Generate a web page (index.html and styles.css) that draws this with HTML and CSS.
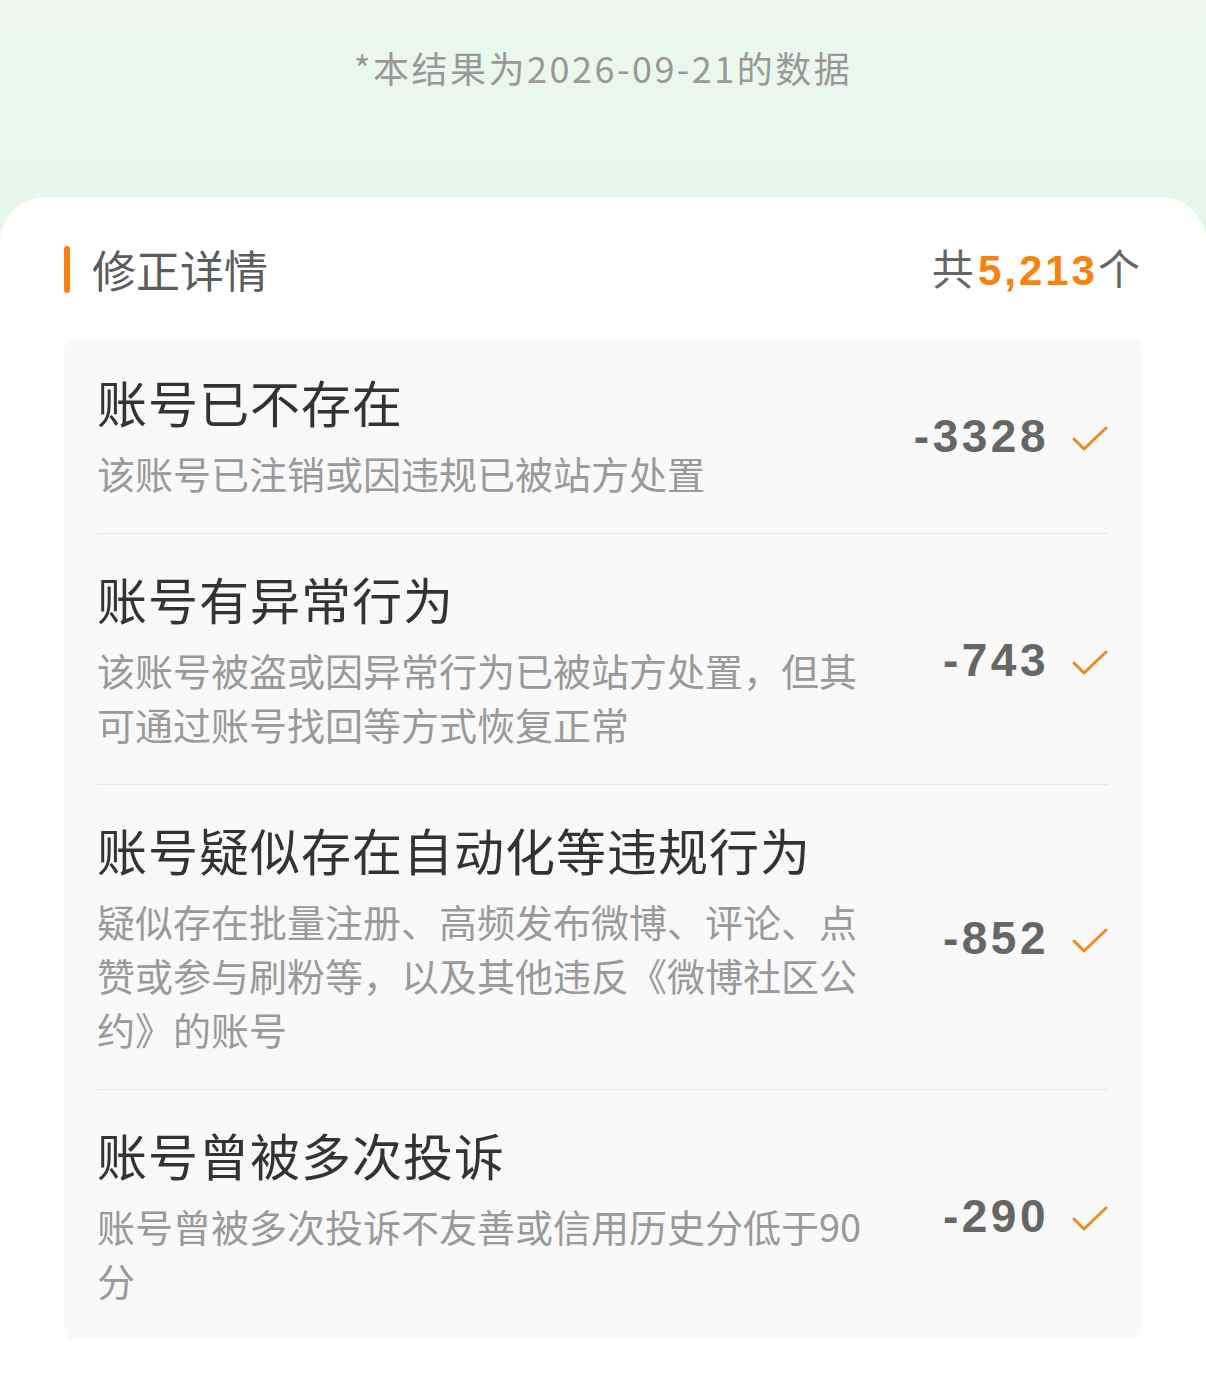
FILE: index.html
```html
<!DOCTYPE html>
<html lang="zh-CN">
<head>
    <meta charset="UTF-8">
    <meta name="viewport" content="width=device-width, initial-scale=1.0">
    <title>修正详情</title>
    <link rel="stylesheet" href="styles.css">
</head>
<body>
    <div class="top">
        <p class="date-note">*本结果为2026-09-21的数据</p>
    </div>

    <div class="card">
        <div class="head">
            <div class="head-title">
                <span class="bar"></span>
                <h2>修正详情</h2>
            </div>
            <div class="total">共<b>5,213</b>个</div>
        </div>

        <div class="list">
            <div class="row">
                <div class="info">
                    <h3>账号已不存在</h3>
                    <p>该账号已注销或因违规已被站方处置</p>
                </div>
                <div class="count">
                    <span class="num">-3328</span>
                    <svg class="check" viewBox="0 0 36 26"><polyline points="2,13 12,23 34,2"/></svg>
                </div>
            </div>
            <div class="row">
                <div class="info">
                    <h3>账号有异常行为</h3>
                    <p>该账号被盗或因异常行为已被站方处置，但其可通过账号找回等方式恢复正常</p>
                </div>
                <div class="count">
                    <span class="num">-743</span>
                    <svg class="check" viewBox="0 0 36 26"><polyline points="2,13 12,23 34,2"/></svg>
                </div>
            </div>
            <div class="row">
                <div class="info">
                    <h3>账号疑似存在自动化等违规行为</h3>
                    <p>疑似存在批量注册、高频发布微博、评论、点赞或参与刷粉等，以及其他违反《微博社区公约》的账号</p>
                </div>
                <div class="count">
                    <span class="num">-852</span>
                    <svg class="check" viewBox="0 0 36 26"><polyline points="2,13 12,23 34,2"/></svg>
                </div>
            </div>
            <div class="row">
                <div class="info">
                    <h3>账号曾被多次投诉</h3>
                    <p>账号曾被多次投诉不友善或信用历史分低于90分</p>
                </div>
                <div class="count">
                    <span class="num">-290</span>
                    <svg class="check" viewBox="0 0 36 26"><polyline points="2,13 12,23 34,2"/></svg>
                </div>
            </div>
        </div>
    </div>
</body>
</html>
```

FILE: styles.css
```css
body {
    margin: 0;
    padding: 0;
    font-family: "Noto Sans CJK SC", "Noto Sans", sans-serif;
    background: linear-gradient(180deg, #ebf9f1 0px, #e4f7ea 260px, #ffffff 260px);
    min-height: 1396px;
}

.top {
    height: 197px;
    overflow: hidden;
}

.date-note {
    margin: 0;
    padding-top: 44px;
    text-align: center;
    font-size: 36px;
    line-height: 46px;
    letter-spacing: 2.5px;
    color: #999;
}

.card {
    background: #fff;
    border-radius: 45px 45px 0 0;
    padding-bottom: 56px;
}

.head {
    display: flex;
    justify-content: space-between;
    align-items: center;
    height: 50px;
    padding: 47px 66px 0 64px;
}

.head-title {
    display: flex;
    align-items: center;
}

.head .bar {
    width: 6px;
    height: 47px;
    border-radius: 3px;
    background: #f5820f;
    margin-right: 22px;
}

.head h2 {
    margin: 0;
    font-size: 44px;
    font-weight: 400;
    color: #5c5c5c;
    line-height: 50px;
}

.total {
    font-size: 42px;
    color: #666;
    line-height: 50px;
}

.total b {
    font-family: "Liberation Sans", Arial, sans-serif;
    font-weight: 700;
    color: #f7820c;
    letter-spacing: 3px;
    margin-left: 4px;
}

.list {
    margin: 43px 65px 0 64px;
    background: #f9f9f9;
    border-radius: 12px;
    padding: 0 33px;
}

.row {
    display: flex;
    align-items: center;
    padding: 29px 0 33px;
    border-bottom: 1px solid #e8e8e8;
}

.row:last-child {
    border-bottom: none;
}

.info {
    width: 780px;
}

.info h3 {
    margin: 0;
    font-size: 50px;
    font-weight: 400;
    line-height: 70px;
    letter-spacing: 1px;
    color: #333;
}

.info p {
    margin: 10px 0 0;
    font-size: 38px;
    line-height: 54px;
    color: #9a9a9a;
}

.count {
    flex: 1;
    display: flex;
    justify-content: flex-end;
    align-items: center;
    padding-top: 6px;
}

.count .num {
    font-family: "Liberation Sans", Arial, sans-serif;
    font-weight: 700;
    font-size: 46px;
    letter-spacing: 3.5px;
    color: #666;
}

.check {
    width: 36px;
    height: 26px;
    margin-left: 23px;
    margin-top: 6px;
}

.check polyline {
    fill: none;
    stroke: #f08a1e;
    stroke-width: 3;
    stroke-linecap: round;
    stroke-linejoin: round;
}
```
